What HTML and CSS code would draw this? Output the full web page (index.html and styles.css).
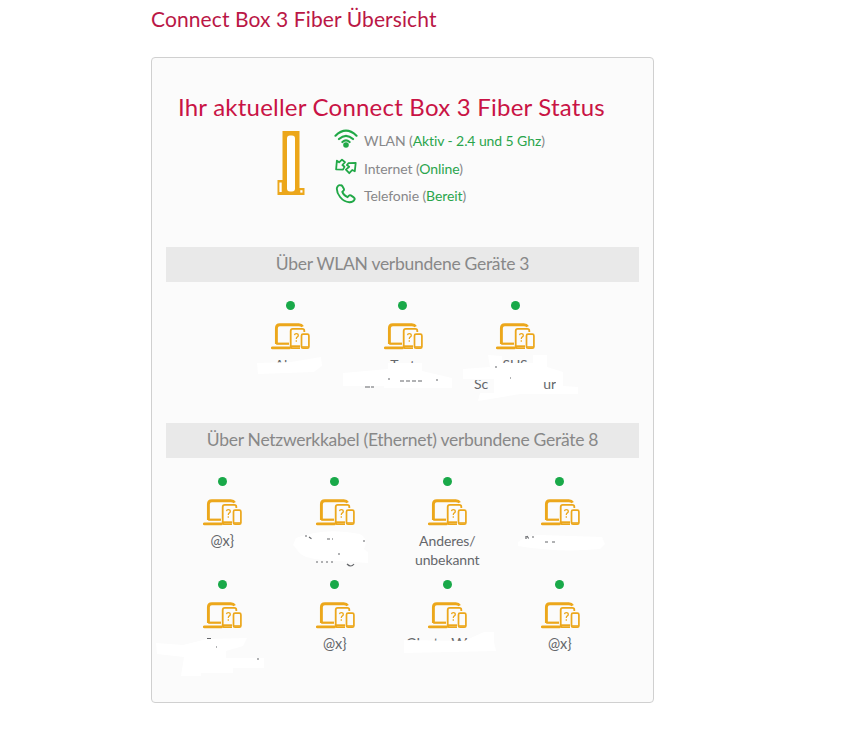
FILE: index.html
```
<!DOCTYPE html>
<html lang="de">
<head>
<meta charset="utf-8">
<title>Connect Box 3 Fiber Übersicht</title>
<link rel="stylesheet" href="styles.css">
</head>
<body>
<svg class="defs" width="0" height="0" aria-hidden="true">
  <symbol id="devices" viewBox="0 0 39 27">
    <g fill="none" stroke="#eca71b">
      <path d="M5.4 21V5.2Q5.4 1.8 8.8 1.8H27.8Q30.6 1.8 31.6 3.6" stroke-width="2.9"/>
      <path d="M5.2 20.7H18" stroke-width="2.2"/>
      <path d="M1.3 24.9H18.5" stroke-width="2.8" stroke-linecap="round"/>
      <path d="M33.3 9V7.7Q33.3 5.8 31.3 5.8H21.8Q19.7 5.8 19.7 7.9V23.3Q19.7 25.2 21.6 25.2H29" stroke-width="1.8"/>
      <path d="M20 23.2H29" stroke-width="1.8"/>
      <rect x="30.5" y="11.2" width="7.4" height="14" rx="1.5" stroke-width="1.7"/>
      <path d="M31 23.9H37.4" stroke-width="1.4"/>
      <path d="M23.5 12.2Q23.7 10.6 25.2 10.6Q27.3 10.6 27.3 12.4Q27.3 13.3 26.1 14.1Q25.3 14.7 25.3 16M25.3 17.3V18.7" stroke-width="1.3"/>
    </g>
  </symbol>
</svg>
<main class="page">
  <h1 class="page-title">Connect Box 3 Fiber Übersicht</h1>
  <section class="panel">
    <h2 class="panel-title">Ihr aktueller Connect Box 3 Fiber Status</h2>
    <div class="status">
      <svg class="router" viewBox="0 0 28 65" width="28" height="65">
        <path d="M5.5 0H22.5V57H27.5V64H.5V49H5.5Z" fill="#eca71b"/>
        <rect x="10" y="4.5" width="8" height="56" rx="3" fill="#fff"/>
        <rect x="2.4" y="51.5" width="2.3" height="9.5" fill="#fff"/>
        <rect x="23.3" y="59.2" width="2.2" height="2.4" fill="#fff"/>
      </svg>
      <ul class="status-list">
        <li>
          <svg viewBox="0 0 24 20" width="24" height="20"><g fill="none" stroke="#21a847" stroke-width="2.2" stroke-linecap="round"><path d="M1.5 6.7Q12 -3.3 22.5 6.7M5 10Q12 3.6 19 10M8.4 13Q12 9.9 15.6 13"/></g><circle cx="12" cy="16" r="2.8" fill="#21a847"/></svg>
          <span class="wlan">WLAN (<b>Aktiv - 2.4 und 5 Ghz</b>)</span>
        </li>
        <li>
          <svg viewBox="0 0 24 20" width="24" height="20"><g fill="none" stroke="#21a847" stroke-width="1.8" stroke-linejoin="round"><path d="M2.9 3.6L5.1 5.3L8 2.6L11 5.2L8.4 8L10.5 9.8L9 12.7L2.1 12.4Z"/><path d="M21.7 5.8L14.4 6.2L12.9 8.1L15.2 9.8L11.9 12.6L15.3 16.2L18.2 13L20.8 14.2Z"/></g></svg>
          <span class="internet">Internet (<b>Online</b>)</span>
        </li>
        <li>
          <svg viewBox="0 0 24 20" width="24" height="20"><path d="M6.8 1.3Q4 .5 2.9 4C2.3 9.5 7.8 17.8 15.4 18.2Q19.4 18.3 20.6 15.4Q21 14.3 19.8 13.4L16.8 11.4Q15.8 10.8 15 11.6L13.5 13.1Q9.8 11.7 8.3 7.9L9.7 6.5Q10.3 5.7 9.8 4.7L8.3 2.1Q7.8 1.4 6.8 1.3Z" fill="none" stroke="#21a847" stroke-width="1.9"/></svg>
          <span class="phone">Telefonie (<b>Bereit</b>)</span>
        </li>
      </ul>
    </div>

    <h3 class="bar bar-wlan">Über WLAN verbundene Geräte 3</h3>
    <div class="grid three">
      <div class="device"><i></i><svg><use href="#devices"/></svg><p class="left-shift">Al</p></div>
      <div class="device"><i></i><svg><use href="#devices"/></svg><p>Test</p></div>
      <div class="device"><i></i><svg><use href="#devices"/></svg><p>SUS<br><span class="split"><span>Sc</span><span>ur</span></span></p></div>
    </div>

    <h3 class="bar bar-lan">Über Netzwerkkabel (Ethernet) verbundene Geräte 8</h3>
    <div class="grid four">
      <div class="device"><i></i><svg><use href="#devices"/></svg><p class="code">@x}</p></div>
      <div class="device"><i></i><svg><use href="#devices"/></svg></div>
      <div class="device"><i></i><svg><use href="#devices"/></svg><p>Anderes/<br>unbekannt</p></div>
      <div class="device"><i></i><svg><use href="#devices"/></svg></div>
      <div class="device"><i></i><svg><use href="#devices"/></svg></div>
      <div class="device"><i></i><svg><use href="#devices"/></svg><p class="code">@x}</p></div>
      <div class="device"><i></i><svg><use href="#devices"/></svg><p class="wide">Chata Wa</p></div>
      <div class="device"><i></i><svg><use href="#devices"/></svg><p class="code">@x}</p></div>
    </div>

    <!-- white strokes that hide the device names -->
    <svg class="redaction" viewBox="151 57 503 646" width="503" height="646" aria-hidden="true">
      <g fill="#fff">
        <path d="M257 363L291 362L321 357L322 366L314 372L258 374Z"/>
        <path d="M388 363H422V371L452 378V388H384V386H343V373L388 369Z"/>
        <path d="M488 355L502 356V363H533V355H547V367L563 372V386L578 387V394H520L478 401L480 393H494V379H463V369L490 367Z"/>
        <path d="M296 538Q325 527 360 534Q369 539 364 549L368 552V563L340 561Q302 560 298 551L293 545Z"/>
        <path d="M518 542Q527 535 540 535L602 537L605 544L600 549Q560 553 518 546Z"/>
        <path d="M156 643L183 645L207 639L247 638L243 646L226 651V658H264V668H233V673H201V676H181L184 657L157 654Z"/>
        <path d="M404 640L464 641L484 632H494V642L496 651L404 653Z"/>
      </g>
      <g fill="none" stroke="#65676b" stroke-width="1.2">
        <path d="M365 387H374" stroke-dasharray="5 1"/>
        <path d="M388 379H390M400 381H424" stroke-dasharray="4 2"/>
        <path d="M436 380H438M495 367H497M510 378H511"/>
        <path d="M305 536H307M309 537L312 539M327 539H333M363 541H365M338 554H340" stroke-dasharray="3 2"/>
        <path d="M316 562H333" stroke-dasharray="2 3"/>
        <path d="M347 564Q351 568 354 564"/>
        <path d="M526 536V539M527 536L529 539M532 537H534M545 542H558" stroke-dasharray="3 4"/>
        <path d="M207 638.5H211M216 647H217M257 659H259"/>
      </g>
    </svg>
  </section>
</main>
</body>
</html>
```
FILE: styles.css
```
* { box-sizing: border-box; }
body { margin: 0; background: #fff; color: #65676b; font-family: Lato, "Liberation Sans", sans-serif; }
.defs { display: block; height: 0; }
.page { width: 503px; margin-left: 151px; padding-top: 4px; }
h1, h2, h3, p, ul { margin: 0; padding: 0; font-weight: 400; }
.page-title { height: 53px; font-size: 21px; line-height: 29px; letter-spacing: .1px; color: #ba1746; white-space: nowrap; }
.panel { position: relative; height: 646px; padding: 32px 14px 0; border: 1px solid #d0d0d0; border-radius: 4px; background: #fbfbfb; }
.panel-title { padding-left: 12px; font-size: 24px; line-height: 34px; letter-spacing: .22px; color: #c91345; white-space: nowrap; }
.status { display: flex; gap: 29px; height: 123px; padding: 7px 0 0 111px; }
.status-list { list-style: none; }
.status-list li { display: flex; gap: 6px; height: 27.5px; font-size: 14px; line-height: 20px; letter-spacing: -.09px; color: #88888a; white-space: nowrap; }
.status-list li svg { margin-top: -2px; }
.status-list b { font-weight: 400; color: #2aa54c; }
.bar { height: 35px; background: #e9e9e9; color: #888; font-size: 17.5px; line-height: 34px; letter-spacing: -.28px; text-align: center; white-space: nowrap; }
.grid { display: grid; grid-auto-rows: 103px; padding-top: 19px; }
.three { grid-template-columns: repeat(3, 112.5px); justify-content: center; height: 141px; }
.four { grid-template-columns: repeat(4, 112.5px); }
.device { display: flex; flex-direction: column; align-items: center; }
.device i { width: 9px; height: 9px; border-radius: 50%; background: #19a949; }
.device svg { width: 39px; height: 27px; margin: 13px 0 5px 1px; flex: none; }
.device p { font-size: 14px; line-height: 19px; letter-spacing: -.1px; text-align: center; white-space: nowrap; }
.device .code { font-size: 14.5px; letter-spacing: 0; }
.device .wide { font-size: 15.5px; padding-right: 14px; letter-spacing: .3px; }
.device .left-shift { padding-right: 18px; }
.split { position: relative; z-index: 1; display: flex; justify-content: space-between; width: 82px; clip-path: inset(6px 0 0); }
.redaction { position: absolute; left: -1px; top: -1px; }
```
